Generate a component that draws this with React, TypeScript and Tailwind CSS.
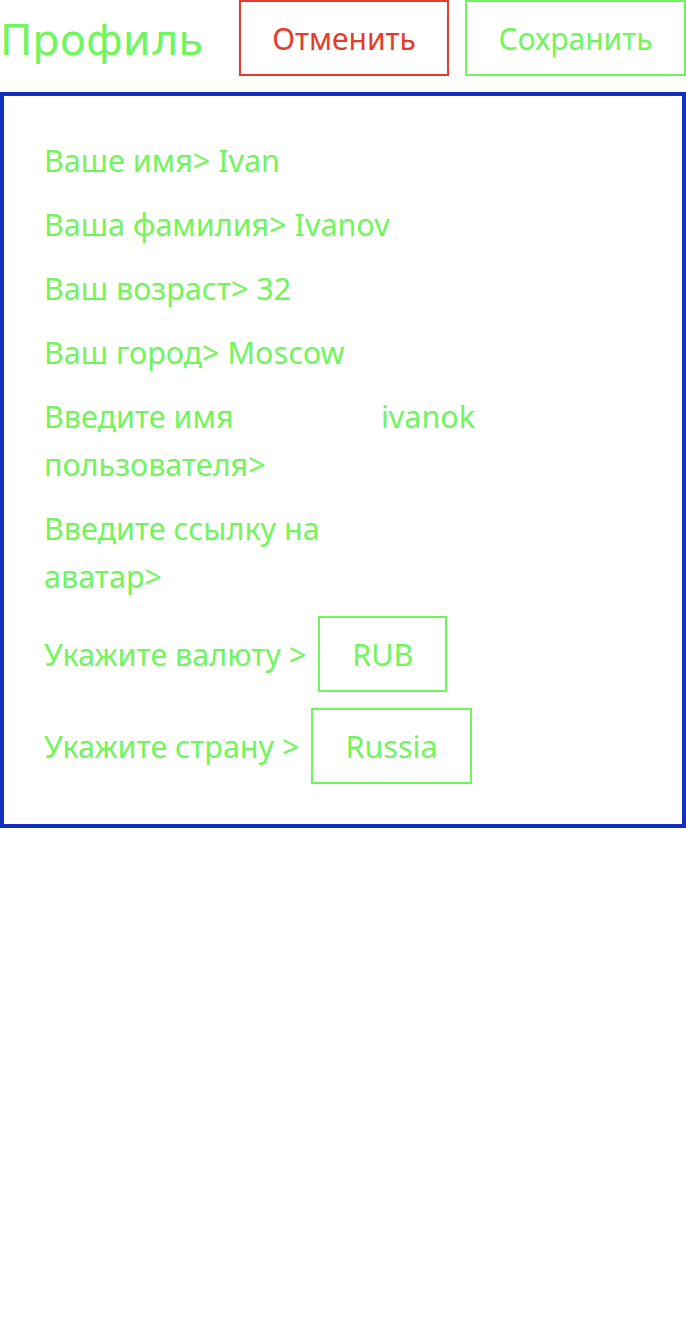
const plex = { fontFamily: '"Noto Sans", "Open Sans", sans-serif' };

function Row({ label, value, wide }: { label: string; value?: string; wide?: boolean }) {
  if (wide) {
    return (
      <div className="flex">
        <div className="w-[337px] shrink-0">{label}</div>
        <div>{value}</div>
      </div>
    );
  }
  return (
    <div>
      {label} {value}
    </div>
  );
}

function Picker({ label, value }: { label: string; value: string }) {
  return (
    <div className="flex items-center gap-[12px]">
      <div>{label}</div>
      <div className="h-[76px] flex items-center border-2 border-[#6ff65a] px-[32px]">{value}</div>
    </div>
  );
}

export default function App() {
  return (
    <div className="w-[686px] bg-white text-[#6ff65a]" style={plex}>
      <div className="flex justify-between items-center h-[76px]">
        <div
          className="text-[43px] leading-[76px] pt-[4px]"
          style={{ fontFamily: '"DejaVu Sans", sans-serif' }}
        >
          Профиль
        </div>
        <div className="flex gap-4 text-[30px]">
          <button className="w-[210px] h-[76px] border-2 border-[#e63a2b] text-[#e63a2b]">Отменить</button>
          <button className="w-[221px] h-[76px] border-2 border-[#6ff65a] text-[#6ff65a]">Сохранить</button>
        </div>
      </div>

      <div className="mt-[16px] border-4 border-[#132fbf] p-10 text-[30.5px] leading-[48px] flex flex-col gap-4">
        <Row label="Ваше имя>" value="Ivan" />
        <Row label="Ваша фамилия>" value="Ivanov" />
        <Row label="Ваш возраст>" value="32" />
        <Row label="Ваш город>" value="Moscow" />
        <Row label="Введите имя пользователя>" value="ivanok" wide />
        <Row label="Введите ссылку на аватар>" value="" wide />
        <Picker label="Укажите валюту >" value="RUB" />
        <Picker label="Укажите страну >" value="Russia" />
      </div>
    </div>
  );
}
